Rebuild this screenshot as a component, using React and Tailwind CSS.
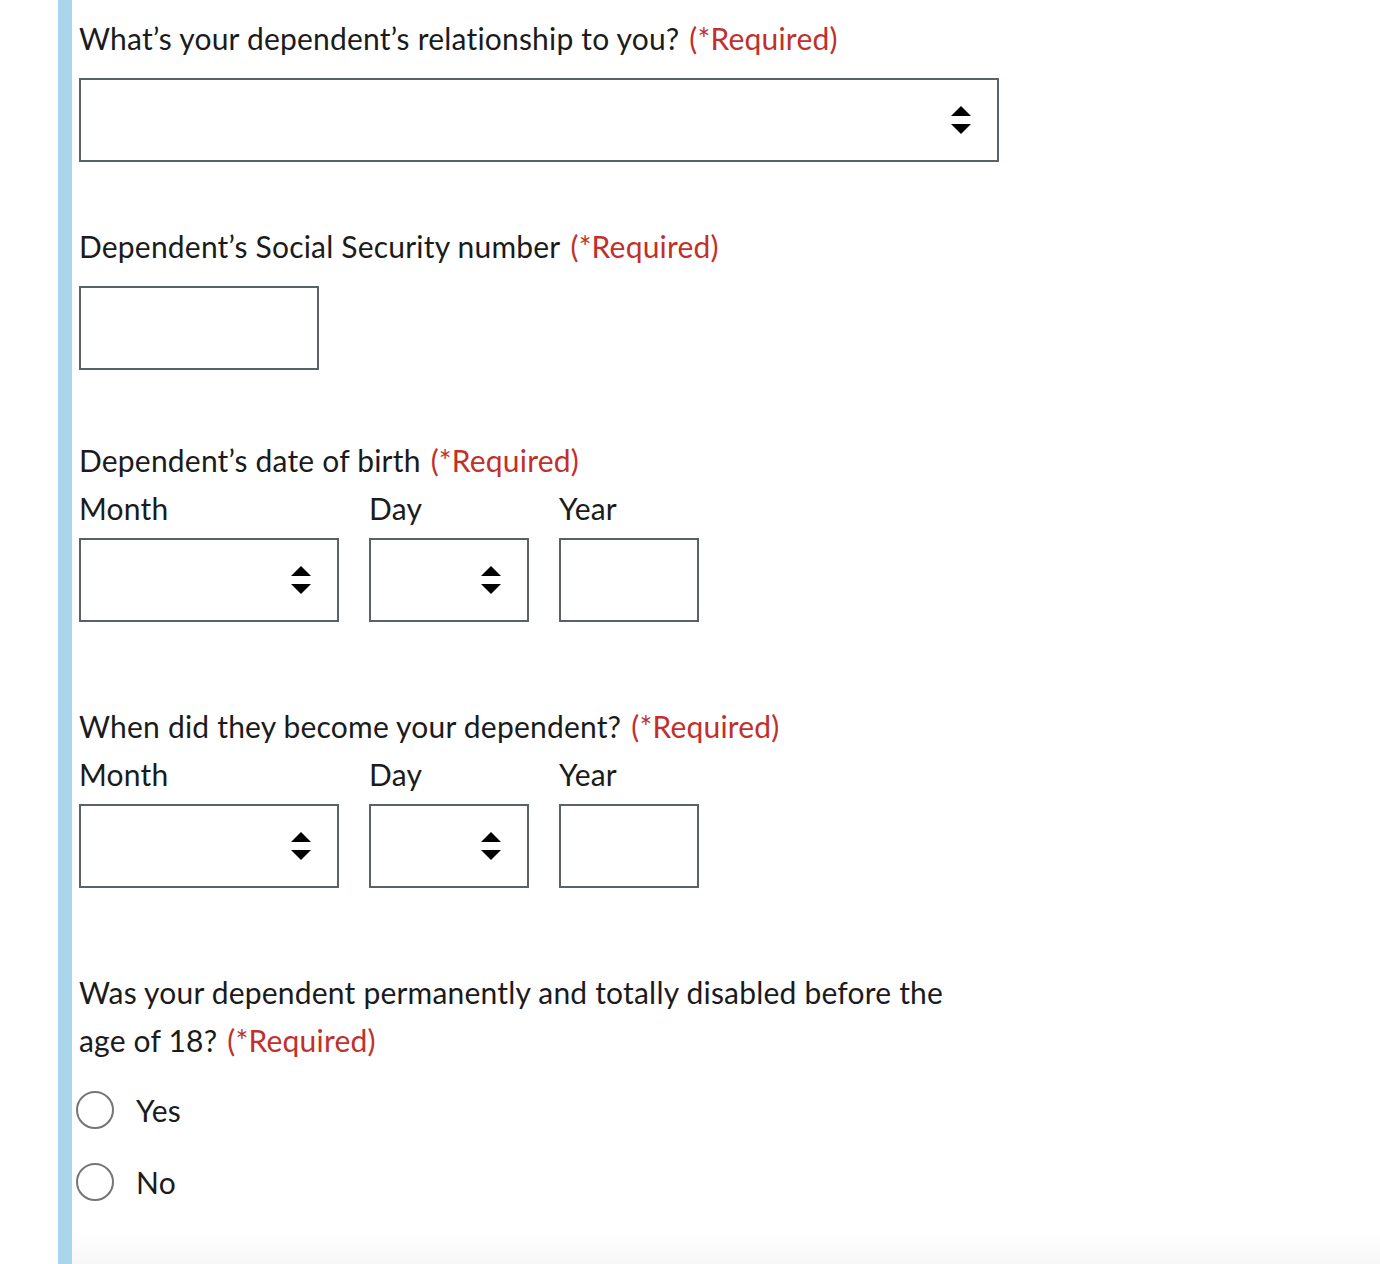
import React from "react";

const Required = () => (
  <span className="ml-[10px] text-[#c1302b] whitespace-nowrap">(*Required)</span>
);

const SelectArrows = () => (
  <svg width="20" height="28" viewBox="0 0 20 28" className="shrink-0">
    <path d="M10 0 L20 10 L0 10 Z" fill="#000" />
    <path d="M0 18 L20 18 L10 28 Z" fill="#000" />
  </svg>
);

const SelectBox = ({ width }) => (
  <div
    className={`${width} h-[84px] border-2 border-[#5b616b] bg-white flex items-center justify-end pr-[26px]`}
  >
    <SelectArrows />
  </div>
);

const TextBox = ({ width }) => (
  <div className={`${width} h-[84px] border-2 border-[#5b616b] bg-white`} />
);

const DateGroup = () => (
  <div className="flex gap-[30px]">
    <div className="flex flex-col">
      <span className="h-[54px]">Month</span>
      <SelectBox width="w-[260px]" />
    </div>
    <div className="flex flex-col">
      <span className="h-[54px]">Day</span>
      <SelectBox width="w-[160px]" />
    </div>
    <div className="flex flex-col">
      <span className="h-[54px]">Year</span>
      <TextBox width="w-[140px]" />
    </div>
  </div>
);

const Radio = ({ label }) => (
  <div className="flex items-center h-[72px] -ml-[3px]">
    <span className="w-[38px] h-[38px] rounded-full border-2 border-[#757575] bg-white" />
    <span className="ml-[22px]">{label}</span>
  </div>
);

export default function App() {
  return (
    <div
      className="flex min-h-[1264px] bg-white text-[30px] leading-[48px] tracking-[0.2px] text-[#1b1b1b]"
      style={{ fontFamily: "'Source Sans Pro', Lato, 'Liberation Sans', sans-serif" }}
    >
      <div className="w-[58px] shrink-0" />
      <div className="w-[14px] shrink-0 bg-[#a9d6ec]" />
      <div className="flex-1 flex flex-col">
        <main className="flex-1 pl-[7px] pt-[14px]">
          {/* relationship */}
          <label className="block">
            What’s your dependent’s relationship to you?
            <Required />
          </label>
          <div className="mt-[16px]">
            <SelectBox width="w-[920px]" />
          </div>

          {/* SSN */}
          <label className="block mt-[60px]">
            Dependent’s Social Security number
            <Required />
          </label>
          <div className="mt-[16px]">
            <TextBox width="w-[240px]" />
          </div>

          {/* date of birth */}
          <label className="block mt-[66px]">
            Dependent’s date of birth
            <Required />
          </label>
          <DateGroup />

          {/* dependent since */}
          <label className="block mt-[80px]">
            When did they become your dependent?
            <Required />
          </label>
          <DateGroup />

          {/* disabled */}
          <fieldset className="mt-[80px]">
            <legend className="w-[880px]">
              <span>
                Was your dependent permanently and totally disabled before the
              </span>
              <br />
              <span>age of 18?</span>
              <Required />
            </legend>
            <div className="mt-[10px]">
              <Radio label="Yes" />
              <Radio label="No" />
            </div>
          </fieldset>
        </main>
        <div className="h-[34px] bg-gradient-to-b from-white to-[#f7f7f7]" />
      </div>
    </div>
  );
}
